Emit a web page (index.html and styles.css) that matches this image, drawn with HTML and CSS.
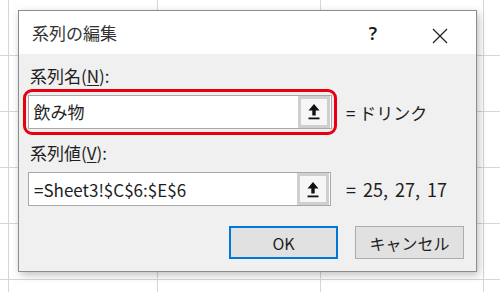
FILE: index.html
```html
<!DOCTYPE html>
<html lang="ja">
<head>
    <meta charset="UTF-8">
    <title>系列の編集</title>
    <link rel="stylesheet" href="styles.css">
</head>
<body>
    <div class="dialog">
        <div class="titlebar">
            <span class="title">系列の編集</span>
            <span class="help">?</span>
            <span class="close">
                <svg width="16" height="16" viewBox="0 0 16 16"><path d="M1 1 L15 15 M15 1 L1 15" stroke="#222" stroke-width="1.3" fill="none"/></svg>
            </span>
        </div>
        <div class="body">
            <div class="label">系列名(<u>N</u>):</div>
            <div class="field-row">
                <div class="field highlight">
                    <div class="input">
                        <span class="input-text">飲み物</span>
                        <span class="ref-btn"><span class="ref-inner">
                            <svg width="12" height="17" viewBox="0 0 12 17"><path d="M6 1 L11.5 7.5 L7.7 7.5 L7.7 12.5 L4.3 12.5 L4.3 7.5 L0.5 7.5 Z" fill="#111"/><rect x="0.5" y="14.5" width="11" height="1.8" fill="#111"/></svg>
                        </span></span>
                    </div>
                </div>
                <span class="value">= ドリンク</span>
            </div>
            <div class="label second">系列値(<u>V</u>):</div>
            <div class="field-row">
                <div class="field">
                    <div class="input">
                        <span class="input-text">=Sheet3!$C$6:$E$6</span>
                        <span class="ref-btn"><span class="ref-inner">
                            <svg width="12" height="17" viewBox="0 0 12 17"><path d="M6 1 L11.5 7.5 L7.7 7.5 L7.7 12.5 L4.3 12.5 L4.3 7.5 L0.5 7.5 Z" fill="#111"/><rect x="0.5" y="14.5" width="11" height="1.8" fill="#111"/></svg>
                        </span></span>
                    </div>
                </div>
                <span class="value num">= 25, 27, 17</span>
            </div>
            <div class="buttons">
                <button class="btn default">OK</button>
                <button class="btn">キャンセル</button>
            </div>
        </div>
    </div>
</body>
</html>
```

FILE: styles.css
```css
body {
    margin: 0;
    padding: 10px 0 0 18px;
    width: 500px;
    height: 292px;
    box-sizing: border-box;
    overflow: hidden;
    font-family: "Noto Sans CJK JP", "Noto Sans", sans-serif;
    color: #1e1e1e;
    background-color: #fff;
    background-image:
        linear-gradient(#d6d6d6, #d6d6d6),
        linear-gradient(#d6d6d6, #d6d6d6),
        linear-gradient(#d6d6d6, #d6d6d6),
        linear-gradient(#d6d6d6, #d6d6d6),
        repeating-linear-gradient(to bottom, #d6d6d6 0, #d6d6d6 1px, transparent 1px, transparent 56px);
    background-size: 1px 100%, 1px 100%, 1px 100%, 1px 100%, 100% 100%;
    background-position: 8px 0, 157px 0, 320px 0, 483px 0, 0 -1px;
    background-repeat: no-repeat;
}
.dialog {
    width: 459px;
    height: 262px;
    box-sizing: border-box;
    border: 1px solid #8c8c8c;
    background: #f0f0f0;
    box-shadow: 2px 3px 8px rgba(0, 0, 0, 0.25);
    display: flex;
    flex-direction: column;
}
.titlebar {
    height: 43px;
    background: #fff;
    display: flex;
    align-items: center;
    padding-left: 13px;
}
.title {
    flex: 1;
    font-size: 17px;
    color: #333;
}
.help {
    width: 20px;
    text-align: center;
    font-size: 18px;
    font-weight: 600;
    font-family: "Noto Sans", sans-serif;
    margin-right: 49px;
}
.close {
    width: 16px;
    height: 16px;
    margin-right: 28px;
}
.body {
    padding: 12px 0 0 11px;
}
.label {
    font-size: 17px;
    line-height: 20px;
    height: 20px;
    margin-bottom: 3px;
}
.label.second {
    margin-top: 8px;
}
.label u {
    text-decoration-thickness: 1px;
    text-underline-offset: 2px;
}
.field-row {
    display: flex;
    align-items: center;
    margin-left: -7px;
}
.field {
    width: 314px;
    height: 46px;
    box-sizing: border-box;
    border: 3px solid transparent;
    border-radius: 9px;
    padding: 3px 3px 3px 2px;
}
.field.highlight {
    border: 3.5px solid #e60012;
    padding: 2.5px 2.5px 2.5px 1.5px;
}
.input {
    height: 34px;
    box-sizing: border-box;
    border: 1px solid #a8a8a8;
    background: #fff;
    display: flex;
    align-items: center;
}
.input-text {
    flex: 1;
    padding-left: 5px;
    font-size: 17px;
}
.ref-btn {
    width: 32px;
    height: 32px;
    box-sizing: border-box;
    background: #cfcfcf;
    padding: 3px;
    margin-right: 1px;
}
.ref-inner {
    display: flex;
    align-items: center;
    justify-content: center;
    height: 100%;
    background: #f6f6f6;
}
.value {
    margin-left: 9px;
    font-size: 17px;
}
.value.num {
    font-size: 18px;
    word-spacing: 3px;
}
.buttons {
    display: flex;
    justify-content: flex-end;
    gap: 17px;
    margin-top: 14px;
    padding-right: 12px;
}
.btn {
    width: 109px;
    height: 33px;
    font-family: inherit;
    font-size: 16px;
    color: #1e1e1e;
    background: #e1e1e1;
    border: 1px solid #adadad;
}
.btn.default {
    border: 2px solid #0078d7;
}
```
